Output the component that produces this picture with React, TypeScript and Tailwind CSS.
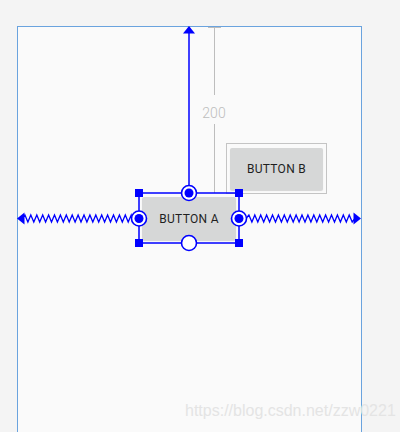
import React from "react";

const BLUE = "#0000ff";

function zigzag(x1: number, x2: number, y: number, step: number, amp: number) {
  let d = `M${x1} ${y}`;
  let up = true;
  for (let x = x1 + step / 2; x < x2; x += step / 2) {
    d += ` L${x.toFixed(1)} ${up ? y - amp : y + amp}`;
    up = !up;
  }
  d += ` L${x2} ${y}`;
  return d;
}

function Anchor({ cx, cy, filled }: { cx: number; cy: number; filled: boolean }) {
  return (
    <g>
      <circle cx={cx} cy={cy} r={7.5} fill="#ffffff" stroke={BLUE} strokeWidth={1.6} />
      {filled && <circle cx={cx} cy={cy} r={4.5} fill={BLUE} />}
    </g>
  );
}

function Blueprint() {
  const corners = [
    [139, 193],
    [239, 193],
    [139, 243],
    [239, 243],
  ];
  return (
    <svg className="absolute left-0 top-0" width={400} height={432} viewBox="0 0 400 432">
      {/* margin line to button B */}
      <line x1={214.5} y1={27} x2={214.5} y2={95} stroke="#bdbdbd" strokeWidth={1} />
      <line x1={208} y1={27.5} x2={221} y2={27.5} stroke="#bdbdbd" strokeWidth={1} />
      <line x1={214.5} y1={124} x2={214.5} y2={193} stroke="#bdbdbd" strokeWidth={1} />

      {/* top constraint */}
      <line x1={189} y1={32} x2={189} y2={186} stroke={BLUE} strokeWidth={1.5} />
      <polygon points="189,26 183,33.5 195,33.5" fill={BLUE} />

      {/* horizontal spring constraints */}
      <path d={zigzag(22, 132, 218.5, 5.9, 3.5)} fill="none" stroke={BLUE} strokeWidth={1.3} />
      <polygon points="17,218.5 24.5,212.5 24.5,224.5" fill={BLUE} />
      <path d={zigzag(246, 355, 218.5, 5.9, 3.5)} fill="none" stroke={BLUE} strokeWidth={1.3} />
      <polygon points="361,218.5 353.5,212.5 353.5,224.5" fill={BLUE} />

      {/* selection box */}
      <rect x={139} y={193} width={100} height={50} fill="none" stroke={BLUE} strokeWidth={1.5} />
      {corners.map(([x, y]) => (
        <rect key={`${x}-${y}`} x={x - 4} y={y - 4} width={8} height={8} fill={BLUE} />
      ))}
      <Anchor cx={189} cy={193} filled />
      <Anchor cx={139} cy={218.5} filled />
      <Anchor cx={239} cy={218.5} filled />
      <Anchor cx={189} cy={243} filled={false} />
    </svg>
  );
}

export default function App() {
  return (
    <div className="relative w-[400px] h-[432px] overflow-hidden bg-[#f4f4f4] pl-[17px] pt-[26px]">
      <div className="w-[345px] h-[420px] border-[1.5px] border-[#6aa3de] bg-[#fafafa]" />

      <span
        className="absolute left-[214px] top-[106px] -translate-x-1/2 text-[14px] leading-none font-light text-[#bdbdbd]"
        style={{ fontFamily: "Roboto, sans-serif" }}
      >
        200
      </span>

      {/* button B with its bounds */}
      <div className="absolute left-[226px] top-[143px] w-[101px] h-[51px] border border-[#c4c4c4] p-[3px] pt-[4px]">
        <div
          className="flex h-[42px] items-center justify-center rounded-[2px] bg-[#d6d7d7] text-[12px] font-normal tracking-[0.3px] text-[#1f1f1f] shadow-[0_1px_1px_rgba(0,0,0,0.15)]"
          style={{ fontFamily: "Roboto, sans-serif" }}
        >
          BUTTON B
        </div>
      </div>

      {/* button A */}
      <div
        className="absolute left-[142px] top-[197px] flex w-[94px] h-[43px] items-center justify-center rounded-[2px] bg-[#d6d7d7] text-[12px] font-normal tracking-[0.3px] text-[#1f1f1f] shadow-[0_1px_1px_rgba(0,0,0,0.15)]"
        style={{ fontFamily: "Roboto, sans-serif" }}
      >
        BUTTON A
      </div>

      <Blueprint />

      <span
        className="absolute left-[185px] top-[403px] text-[16px] leading-none text-[#e4e4e4] whitespace-nowrap"
        style={{ fontFamily: "'Liberation Sans', Arial, sans-serif" }}
      >
        https://blog.csdn.net/zzw0221
      </span>
    </div>
  );
}
